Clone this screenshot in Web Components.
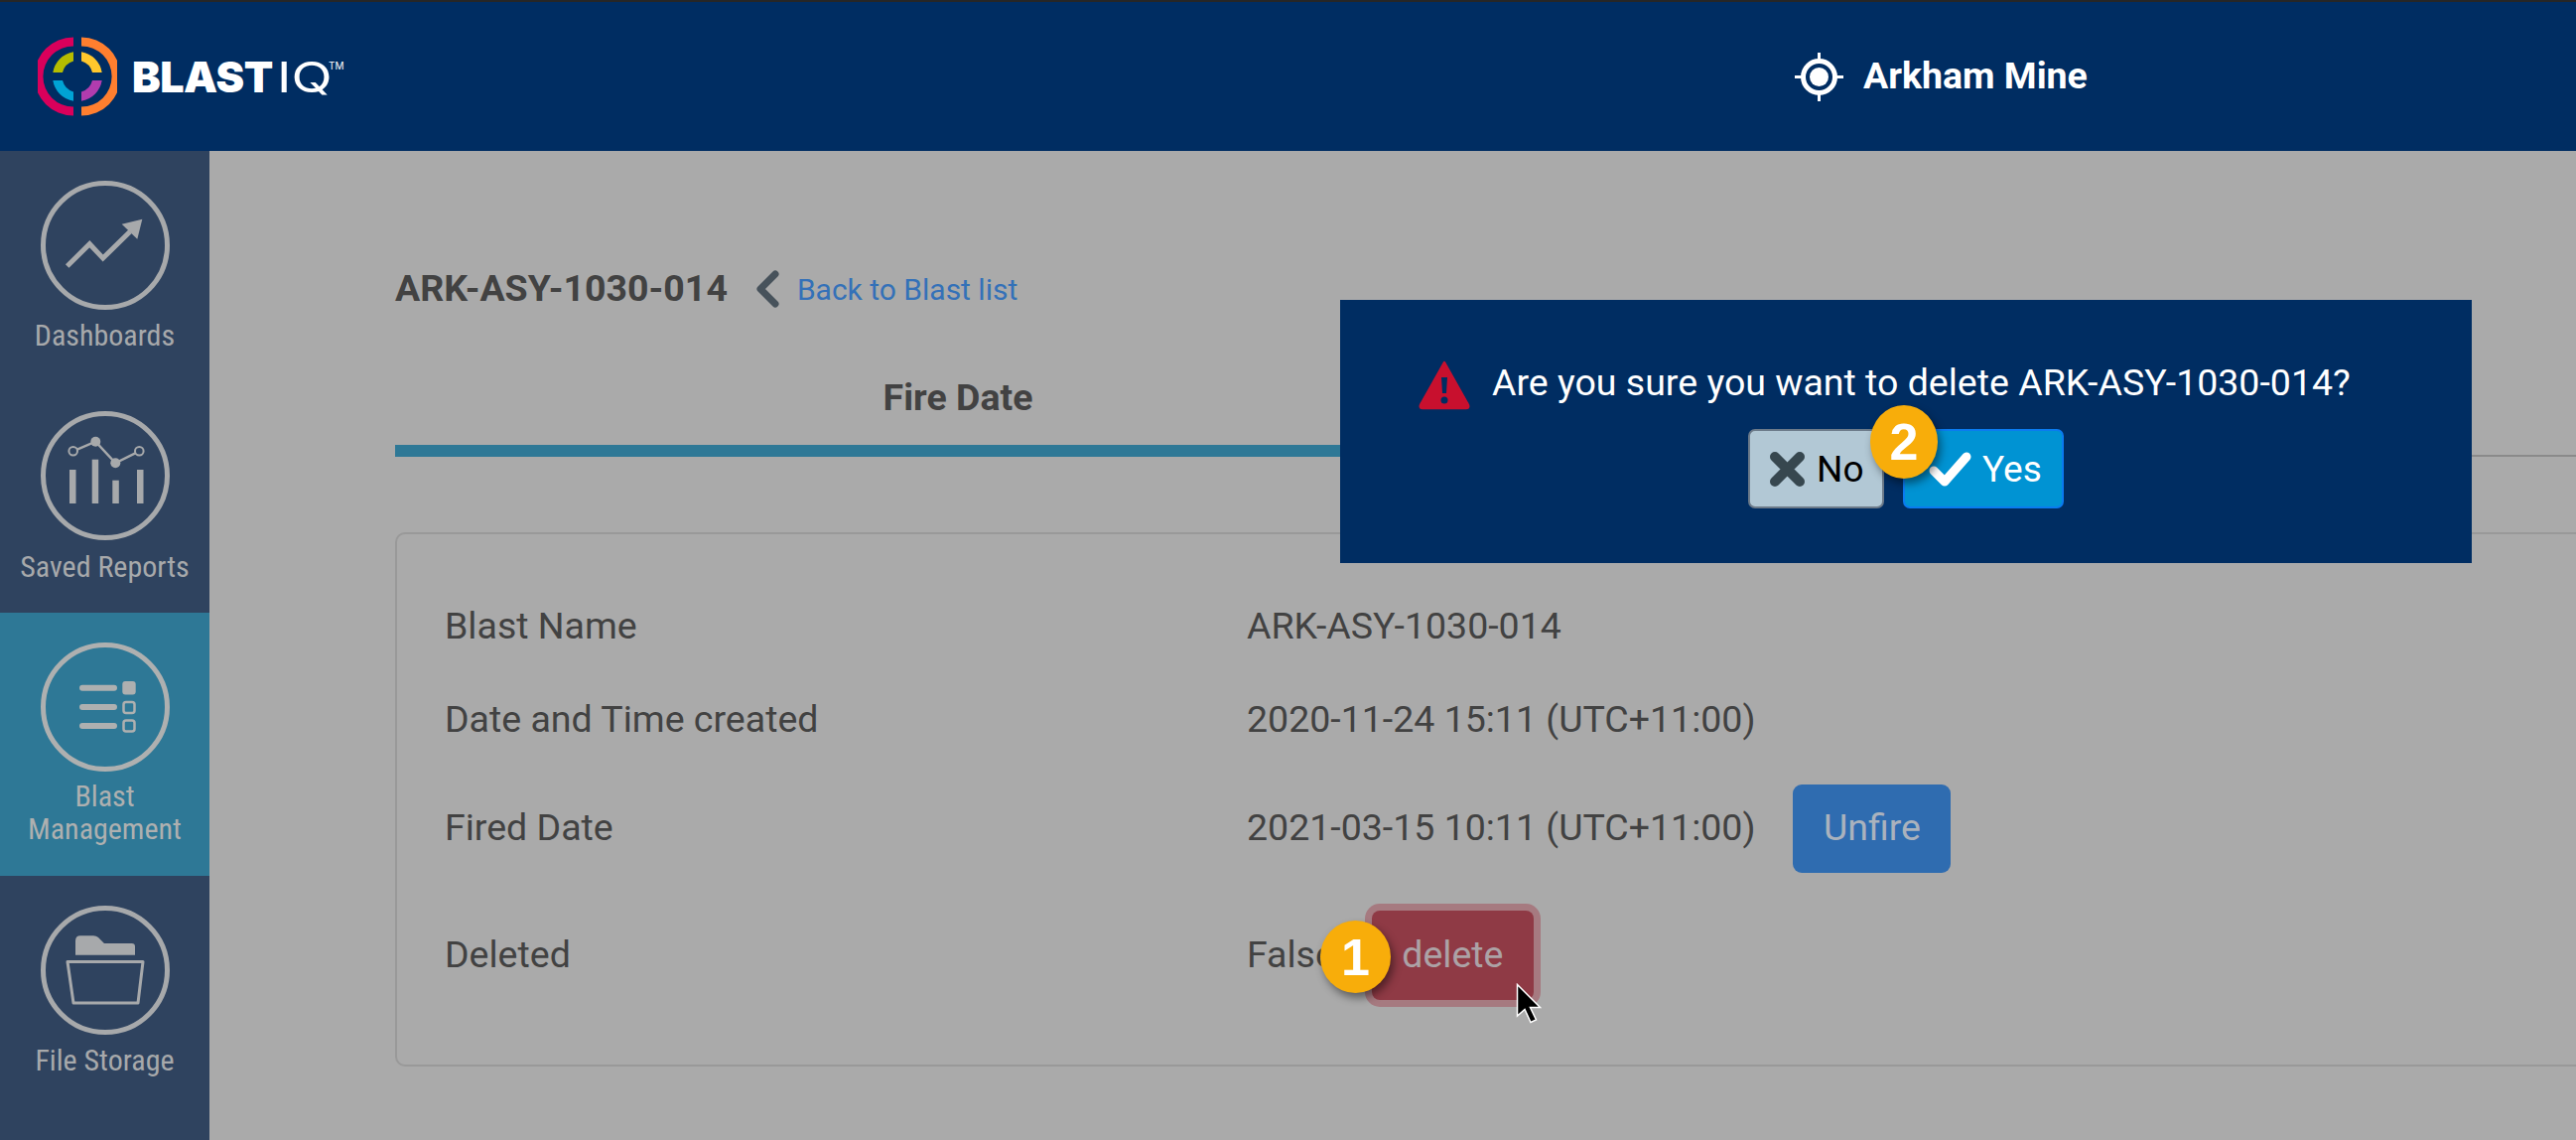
<!DOCTYPE html>
<html>
<head>
<meta charset="utf-8">
<title>BlastIQ</title>
<style>
  html, body { margin: 0; height: 100%; overflow: hidden; background: #aaa; }
  body { font-family: Roboto, "Liberation Sans", sans-serif; }
</style>
</head>
<body>
<blast-app>
  <blast-header slot="header" site="Arkham Mine"></blast-header>
  <blast-sidebar slot="sidebar">
    <nav-item label="Dashboards" icon="dashboards" style="height:232px;--label-gap:9px"></nav-item>
    <nav-item label="Saved Reports" icon="reports" style="height:233px;--label-gap:10px"></nav-item>
    <nav-item label="Blast Management" icon="blasts" active style="height:265px;--label-gap:8px"></nav-item>
    <nav-item label="File Storage" icon="files" style="height:266px;--label-gap:9px"></nav-item>
  </blast-sidebar>
  <blast-detail name="ARK-ASY-1030-014"></blast-detail>
  <confirm-dialog message="Are you sure you want to delete ARK-ASY-1030-014?"></confirm-dialog>
</blast-app>

<script>
// Small helper so every component below declares markup the same way
function shadow(el, html) {
  el.attachShadow({ mode: "open" }).innerHTML = html;
}

// Overall page frame: header on top, sidebar + content underneath
class BlastApp extends HTMLElement {
  constructor() {
    super();
    shadow(this, `
      <style>
        :host { display: flex; flex-direction: column; position: relative; width: 2595px; height: 1148px; overflow: hidden; }
        .body { display: flex; flex: 1; min-height: 0; }
      </style>
      <slot name="header"></slot>
      <div class="body">
        <slot name="sidebar"></slot>
        <slot></slot>
      </div>`);
  }
}

class BlastHeader extends HTMLElement {
  connectedCallback() {
    if (this.shadowRoot) return;
    shadow(this, `
      <style>
        :host { display: flex; align-items: center; height: 150px; background: #002d62; border-top: 2px solid #262626; color: #fff; flex: none; }
        .logo { display: flex; align-items: center; margin-left: 38px; width: 1770px; }
        .mark { display: block; margin-right: 15px; }
        .blast { font: 900 43px/1 Inter, sans-serif; letter-spacing: -0.5px; }
        .iq { display: inline-block; font: 400 43px/1 Inter, sans-serif; margin: 0 8px 0 4px; transform: scaleX(1.25); transform-origin: left center; }
        .tm { font: 400 10px/1 Inter, sans-serif; align-self: flex-start; margin: 5px 0 0 0; }
        .word { display: flex; align-items: center; }
        .site { display: flex; align-items: center; gap: 20px; font: 700 37.5px/1 Roboto, sans-serif; }
      </style>
      <div class="logo">
        <svg class="mark" width="80" height="80" viewBox="0 0 80 80">
          <path d="M36 .5A39.5 39.5 0 0 0 36 79.5V70.6A30.6 30.6 0 0 1 36 9.4Z" fill="#d9005b"/>
          <path d="M44 .5A39.5 39.5 0 0 1 44 79.5V70.6A30.6 30.6 0 0 0 44 9.4Z" fill="#ff7f2f"/>
          <path d="M36 15.3A25 25 0 0 0 15.3 36H25A16 16 0 0 1 36 24.6Z" fill="#b5bd00"/>
          <path d="M44 15.3A25 25 0 0 1 64.7 36H55A16 16 0 0 0 44 24.6Z" fill="#ffc72c"/>
          <path d="M36 64.7A25 25 0 0 1 15.3 44H25A16 16 0 0 0 36 55.4Z" fill="#00a3d4"/>
          <path d="M44 64.7A25 25 0 0 0 64.7 44H55A16 16 0 0 1 44 55.4Z" fill="#b13cae"/>
        </svg>
        <div class="word"><span class="blast">BLAST</span><span class="iq">IQ</span><span class="tm">TM</span></div>
      </div>
      <div class="site">
        <svg width="49" height="49" viewBox="0 0 49 49">
          <circle cx="24.5" cy="24.5" r="16" fill="none" stroke="#fff" stroke-width="5"/>
          <circle cx="24.5" cy="24.5" r="9.5" fill="#fff"/>
          <path d="M24.5 0V8M24.5 41V49M0 24.5H8M41 24.5H49" stroke="#fff" stroke-width="3"/>
        </svg>
        <span>${this.getAttribute("site")}</span>
      </div>`);
  }
}

class BlastSidebar extends HTMLElement {
  constructor() {
    super();
    shadow(this, `
      <style>
        :host { display: flex; flex-direction: column; width: 211px; background: #2f435f; flex: none; }
      </style>
      <slot></slot>`);
  }
}

// Sidebar glyphs, drawn on a 130 box matching the circle
const NAV_ICONS = {
  dashboards: `
    <path d="M26.7 86 49.3 63.7 62.7 78 90 51.3" fill="none" stroke="currentColor" stroke-width="5"/>
    <path d="M81.7 43.7 102.3 38.7 97.3 58.7Z" fill="currentColor"/>`,
  reports: `
    <rect x="29" y="59" width="6.5" height="34"/><rect x="51.7" y="48.7" width="6.5" height="44.3"/>
    <rect x="72.3" y="69.7" width="6.5" height="23.3"/><rect x="97" y="59" width="6.5" height="34"/>
    <path d="M32.7 40.3 55.3 30.7 75.3 52.3 99.3 40.3" fill="none" stroke="currentColor" stroke-width="2.5"/>
    <circle cx="55.3" cy="30.7" r="5"/><circle cx="75.3" cy="52.3" r="5"/>
    <circle cx="32.7" cy="40.3" r="4.3" fill="#2f435f" stroke="currentColor" stroke-width="2"/>
    <circle cx="99.3" cy="40.3" r="4.3" fill="#2f435f" stroke="currentColor" stroke-width="2"/>`,
  blasts: `
    <path d="M42 45.7H74M42 65H74M42 84H74" fill="none" stroke="currentColor" stroke-width="6" stroke-linecap="round"/>
    <rect x="82.3" y="39" width="13.4" height="13.4" rx="3"/>
    <rect x="83.5" y="60" width="11" height="11" rx="2.5" fill="none" stroke="currentColor" stroke-width="2.5"/>
    <rect x="83.5" y="78.5" width="11" height="11" rx="2.5" fill="none" stroke="currentColor" stroke-width="2.5"/>`,
  files: `
    <path d="M35 49.7V35.5Q35 30.3 40 30.3H53Q56 30.3 58 32L64 38H91.7Q95 38 95 41.3V49.7Z"/>
    <path d="M27 56.5H103L98 98H33Z" fill="none" stroke="currentColor" stroke-width="3" stroke-linejoin="round"/>`,
};

class NavItem extends HTMLElement {
  connectedCallback() {
    if (this.shadowRoot) return;
    const words = this.getAttribute("label");
    shadow(this, `
      <style>
        :host { display: flex; flex-direction: column; align-items: center; box-sizing: border-box; padding-top: 30px; color: #a7a9ab; flex: none; }
        :host([active]) { background: #2e7896; color: #aeb0b0; }
        svg { display: block; fill: currentColor; }
        .label { width: 180px; margin-top: var(--label-gap, 8px); text-align: center; font: 400 30px/33px Roboto, sans-serif; font-stretch: 75%; }
      </style>
      <svg width="130" height="130" viewBox="0 0 130 130">
        <circle cx="65" cy="65" r="62.5" fill="none" stroke="currentColor" stroke-width="5"/>
        ${NAV_ICONS[this.getAttribute("icon")]}
      </svg>
      <div class="label">${words}</div>`);
  }
}

// Label / value row of the blast detail card
class DetailRow extends HTMLElement {
  connectedCallback() {
    if (this.shadowRoot) return;
    shadow(this, `
      <style>
        :host { display: flex; align-items: center; color: #424242; font: 400 37.5px/1 Roboto, sans-serif; }
        .label { width: 808px; flex: none; }
        .value { display: flex; align-items: center; }
      </style>
      <div class="label">${this.getAttribute("label")}</div>
      <div class="value"><slot></slot></div>`);
  }
}

class BlastDetail extends HTMLElement {
  connectedCallback() {
    if (this.shadowRoot) return;
    const name = this.getAttribute("name");
    shadow(this, `
      <style>
        :host { display: block; flex: 1; min-width: 0; background: #aaa; padding: 0 0 0 187px; overflow: hidden; }
        .crumb { display: flex; align-items: center; height: 44px; margin-top: 117px; color: #424242; }
        .crumb b { font: 700 37.5px/1 Roboto, sans-serif; }
        .crumb svg { margin: 0 18px 0 28px; }
        .crumb a { font: 400 30px/1 Roboto, sans-serif; color: #3471b8; text-decoration: none; padding-top: 2px; }
        .tabs { display: flex; height: 112px; margin-top: 35px; width: 2300px; border-bottom: 2px solid #8a8a8a; box-sizing: border-box; }
        .tab { width: 1134px; height: 112px; flex: none; box-sizing: border-box; text-align: center; padding-top: 30px; font: 700 37.5px/44px Roboto, sans-serif; color: #424242; border-bottom: 12px solid #2e7896; }
        .card { width: 2300px; box-sizing: border-box; height: 538px; margin-top: 76px; padding: 46px 0 0 48px; border: 2px solid #999; border-radius: 10px; display: grid; grid-template-rows: 94px 94px 124px 132px; align-content: start; }
        .btn-unfire { margin-left: 38px; display: flex; align-items: center; justify-content: center; width: 159px; height: 89px; box-sizing: border-box; border-radius: 9px; background: #2f6cb0; color: #aab2bd; font: 400 37.5px/1 Roboto, sans-serif; }
        .false { position: relative; display: flex; align-items: center; }
        .btn-del { display: flex; align-items: center; justify-content: center; width: 163px; height: 90px; box-sizing: border-box; margin-left: 37px; border-radius: 8px; background: #8f3a45; box-shadow: 0 0 0 7px #a67a80; color: #aca2a6; font: 400 37.5px/1 Roboto, sans-serif; }
        step-badge { position: absolute; left: 74px; top: 10px; width: 71px; height: 73px; }
        .cursor { position: absolute; left: 271px; top: 73px; }
      </style>
      <div class="crumb">
        <b>${name}</b>
        <svg width="24" height="38" viewBox="0 0 24 38"><path d="M20 4 5 19 20 34" fill="none" stroke="#47525b" stroke-width="7" stroke-linecap="round" stroke-linejoin="round"/></svg>
        <a href="#">Back to Blast list</a>
      </div>
      <div class="tabs"><div class="tab">Fire Date</div></div>
      <div class="card">
        <detail-row label="Blast Name">${name}</detail-row>
        <detail-row label="Date and Time created">2020-11-24 15:11 (UTC+11:00)</detail-row>
        <detail-row label="Fired Date">2021-03-15 10:11 (UTC+11:00)<div class="btn-unfire">Unfire</div></detail-row>
        <detail-row label="Deleted">
          <div class="false">False
            <div class="btn-del">delete</div>
            <step-badge>1</step-badge>
            <svg class="cursor" width="26" height="41" viewBox="0 0 26 41"><path d="M1.5 1.5V33L9 26.5 15 39.5 20.5 37 14.5 24.5H24.5Z" fill="#000" stroke="#fff" stroke-width="1.5"/></svg>
          </div>
        </detail-row>
      </div>`);
  }
}

class StepBadge extends HTMLElement {
  constructor() {
    super();
    shadow(this, `
      <style>
        :host { display: flex; align-items: center; justify-content: center; border-radius: 50%; background: #f8ad0a; color: #fff; font: 700 52px/1 "Liberation Sans", sans-serif; box-shadow: 3px 5px 8px rgba(0,0,0,.45); }
      </style>
      <slot></slot>`);
  }
}

class ConfirmDialog extends HTMLElement {
  connectedCallback() {
    if (this.shadowRoot) return;
    shadow(this, `
      <style>
        :host { position: absolute; left: 1350px; top: 302px; width: 1140px; height: 265px; background: #002d62; color: #fff; display: flex; flex-direction: column; align-items: center; font: 400 37.5px/44px Roboto, sans-serif; }
        .msg { display: flex; align-items: flex-start; gap: 20px; margin-top: 61px; height: 50px; align-self: flex-start; margin-left: 77px; white-space: nowrap; }
        .msg svg { flex: none; }
        .actions { position: relative; display: flex; gap: 19px; margin-top: 19px; }
        button { display: flex; align-items: center; height: 80px; box-sizing: border-box; border-radius: 7px; font: 400 37px/1 Roboto, sans-serif; padding: 0; }
        .no { width: 137px; background: #b2c8d5; border: 2px solid #6c7a89; color: #000; padding-left: 19px; gap: 11px; }
        .yes { width: 162px; background: #0093d3; border: 2px solid #0a7bf0; color: #fff; padding-left: 23px; gap: 10px; }
        step-badge { position: absolute; left: 123px; top: -24px; width: 68px; height: 74px; }
      </style>
      <div class="msg">
        <svg width="56" height="50" viewBox="0 0 56 50">
          <path d="M28 2 51 43Q54 48 50 48H6Q2 48 5 43Z" fill="#c8102e" stroke="#c8102e" stroke-width="2.5" stroke-linejoin="round"/>
          <path d="M25 17H31L30 33H26Z" fill="#002d62"/>
          <circle cx="28" cy="40" r="3.5" fill="#002d62"/>
        </svg>
        <span>${this.getAttribute("message")}</span>
      </div>
      <div class="actions">
        <button class="no">
          <svg width="37" height="37" viewBox="0 0 37 37"><path d="M6 6 31 31M31 6 6 31" stroke="#37474f" stroke-width="10" stroke-linecap="round"/></svg>
          No
        </button>
        <button class="yes">
          <svg width="45" height="37" viewBox="0 0 45 37"><path d="M6 20 17 31 39 6" fill="none" stroke="#fff" stroke-width="9" stroke-linecap="round" stroke-linejoin="round"/></svg>
          Yes
        </button>
        <step-badge>2</step-badge>
      </div>`);
  }
}

customElements.define("blast-app", BlastApp);
customElements.define("blast-header", BlastHeader);
customElements.define("blast-sidebar", BlastSidebar);
customElements.define("nav-item", NavItem);
customElements.define("detail-row", DetailRow);
customElements.define("blast-detail", BlastDetail);
customElements.define("step-badge", StepBadge);
customElements.define("confirm-dialog", ConfirmDialog);
</script>
</body>
</html>
